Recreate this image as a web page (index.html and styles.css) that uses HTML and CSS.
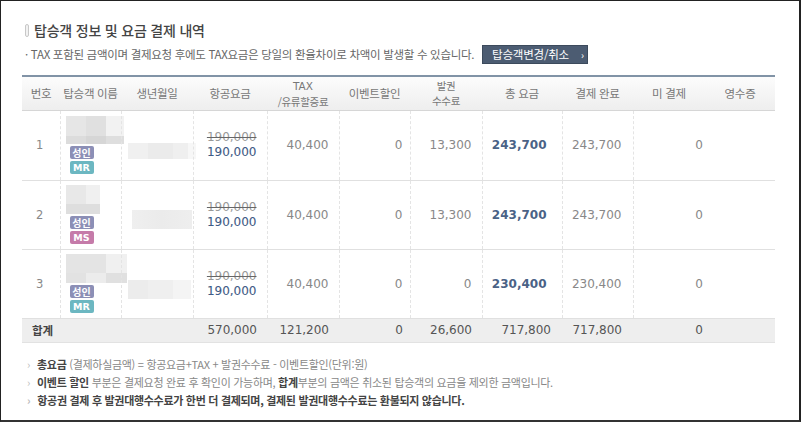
FILE: index.html
```html
<!DOCTYPE html>
<html lang="ko">
<head>
<meta charset="utf-8">
<link rel="stylesheet" href="styles.css">
</head>
<body>
<div class="frame">
  <h2 class="title"><span class="title-bar"></span>탑승객 정보 및 요금 결제 내역</h2>
  <div class="notice">
    <p class="notice-text">· TAX 포함된 금액이며 결제요청 후에도 TAX요금은 당일의 환율차이로 차액이 발생할 수 있습니다.</p>
    <button class="btn">탑승객변경/취소 <span class="btn-arrow">›</span></button>
  </div>
  <table class="fare">
    <colgroup>
      <col class="c-no"><col class="c-name"><col class="c-birth"><col class="c-fare"><col class="c-tax"><col class="c-evt"><col class="c-fee"><col class="c-total"><col class="c-paid"><col class="c-unpaid"><col class="c-rcpt">
    </colgroup>
    <thead>
      <tr>
        <th>번호</th><th>탑승객 이름</th><th>생년월일</th><th>항공요금</th><th class="two"><span class="latin">TAX</span><br>/유류할증료</th><th>이벤트할인</th><th class="two">발권<br>수수료</th><th>총 요금</th><th>결제 완료</th><th>미 결제</th><th>영수증</th>
      </tr>
    </thead>
    <tbody>
      <tr class="r1">
        <td class="no">1</td>
        <td class="name"><div class="blur b-n1"></div><span class="badge adult">성인</span><span class="badge mr">MR</span></td>
        <td class="birth"><div class="blur b-b1"></div></td>
        <td class="num fare-cell"><del>190,000</del><strong>190,000</strong></td>
        <td class="num">40,400</td>
        <td class="num evt">0</td>
        <td class="num">13,300</td>
        <td class="num total">243,700</td>
        <td class="num paid">243,700</td>
        <td class="num unpaid">0</td>
        <td class="rcpt"></td>
      </tr>
      <tr class="r2">
        <td class="no">2</td>
        <td class="name"><div class="blur b-n2"></div><span class="badge adult">성인</span><span class="badge ms">MS</span></td>
        <td class="birth"><div class="blur b-b2"></div></td>
        <td class="num fare-cell"><del>190,000</del><strong>190,000</strong></td>
        <td class="num">40,400</td>
        <td class="num evt">0</td>
        <td class="num">13,300</td>
        <td class="num total">243,700</td>
        <td class="num paid">243,700</td>
        <td class="num unpaid">0</td>
        <td class="rcpt"></td>
      </tr>
      <tr class="r3">
        <td class="no">3</td>
        <td class="name"><div class="blur b-n3"></div><span class="badge adult">성인</span><span class="badge mr">MR</span></td>
        <td class="birth"><div class="blur b-b3"></div></td>
        <td class="num fare-cell"><del>190,000</del><strong>190,000</strong></td>
        <td class="num">40,400</td>
        <td class="num evt">0</td>
        <td class="num">0</td>
        <td class="num total">230,400</td>
        <td class="num paid">230,400</td>
        <td class="num unpaid">0</td>
        <td class="rcpt"></td>
      </tr>
    </tbody>
    <tfoot>
      <tr>
        <td colspan="3" class="sum-label">합계</td>
        <td class="num">570,000</td>
        <td class="num">121,200</td>
        <td class="num evt">0</td>
        <td class="num">26,600</td>
        <td class="num total-sum">717,800</td>
        <td class="num paid">717,800</td>
        <td class="num unpaid">0</td>
        <td></td>
      </tr>
    </tfoot>
  </table>
  <ul class="notes">
    <li><b>총요금</b> (결제하실금액) = 항공요금+TAX + 발권수수료 - 이벤트할인(단위:원)</li>
    <li><b>이벤트 할인</b> 부분은 결제요청 완료 후 확인이 가능하며, <b>합계</b>부분의 금액은 취소된 탑승객의 요금을 제외한 금액입니다.</li>
    <li class="strong">항공권 결제 후 발권대행수수료가 한번 더 결제되며, 결제된 발권대행수수료는 환불되지 않습니다.</li>
  </ul>
</div>
</body>
</html>
```

FILE: styles.css
```css
* { box-sizing: border-box; }
html, body { margin: 0; padding: 0; background: #fff; }
body {
  font-family: "Noto Sans CJK KR", "Noto Sans", sans-serif;
  color: #666;
}
.frame {
  width: 801px;
  height: 422px;
  border: 1px solid #222;
  border-right-width: 2px;
  border-bottom: 2px solid #333;
  padding: 0 0 0 21px;
  position: relative;
  overflow: hidden;
}
.title {
  margin: 18px 0 0 3px;
  height: 22px;
  display: flex;
  align-items: center;
  font-size: 14px;
  font-weight: 500;
  color: #444;
  letter-spacing: -0.2px;
}
.title-bar {
  display: inline-block;
  width: 4px;
  height: 13px;
  border: 1px solid #c8c8c8;
  border-radius: 2px;
  background: #f2f2f2;
  margin-right: 5px;
}
.notice {
  display: flex;
  align-items: center;
  margin-top: 3px;
  height: 20px;
  padding-left: 3px;
}
.notice-text {
  margin: 0;
  font-size: 11.5px;
  color: #666;
  letter-spacing: -0.3px;
  width: 457px;
  white-space: nowrap;
}
.btn {
  width: 106px;
  height: 19px;
  border: 1px solid #3c4a5c;
  background: #4c5c72;
  color: #fff;
  font-family: "Noto Sans CJK KR", sans-serif;
  font-size: 11.5px;
  padding: 0 0 0 9px;
  text-align: left;
  line-height: 16px;
  letter-spacing: -0.2px;
}
.btn-arrow { margin-left: 9px; font-size: 10px; }

.fare {
  width: 753px;
  margin-top: 11px;
  border-collapse: collapse;
  table-layout: fixed;
  border-top: 2px solid #8193a6;
}
.c-no { width: 38px; }
.c-name { width: 61px; }
.c-birth { width: 72px; }
.c-fare { width: 74px; }
.c-tax { width: 72px; }
.c-evt { width: 71px; }
.c-fee { width: 72px; }
.c-total { width: 80px; }
.c-paid { width: 71px; }
.c-unpaid { width: 72px; }
.c-rcpt { width: 70px; }

.fare th {
  height: 34px;
  font-size: 11.5px;
  font-weight: 400;
  color: #777;
  background: linear-gradient(#fcfcfc, #eeeeee);
  border-bottom: 1px solid #d6d6d6;
  padding: 0;
  letter-spacing: -0.3px;
  white-space: nowrap;
}
.fare th.two { line-height: 15px; font-size: 10.5px; }
.fare th .latin { font-family: "DejaVu Sans", sans-serif; font-size: 10.5px; letter-spacing: 0; }
.fare tbody td {
  border-bottom: 1px solid #e0e0e0;
  border-right: 1px dashed #e4e4e4;
  padding: 0;
  vertical-align: middle;
  font-size: 12px;
  color: #888;
}
.fare tbody tr.r1 td { height: 70px; }
.fare tbody tr.r2 td { height: 69px; }
.fare tbody tr.r3 td { height: 69px; }
.fare tbody td.unpaid, .fare tbody td.rcpt { border-right: none; }
.fare td.no { text-align: center; font-family: "DejaVu Sans", sans-serif; font-size: 11.5px; color: #888; padding-right: 2px; }
.fare td.name { padding-left: 5px; }
.fare td.birth { padding-left: 6px; }
.num {
  text-align: right;
  font-family: "DejaVu Sans", sans-serif;
  font-size: 12px;
  color: #888;
  padding-right: 10px !important;
  white-space: nowrap;
}
.fare td.evt { padding-right: 7px !important; }
.fare td.total { color: #4a6286; font-weight: bold; padding-right: 15px !important; }
.fare td.paid { padding-right: 11px !important; }
.fare td.unpaid { padding-right: 2px !important; }
.fare-cell { line-height: 15px; }
.fare-cell del { display: block; color: #999; text-decoration-color: #666; }
.fare-cell strong { display: block; color: #3f5b86; font-weight: 400; -webkit-text-stroke: 0.1px #3f5b86; }

.blur { background: #e9e9e9; }
.b-n1 {
  width: 58px; height: 28px; margin-bottom: 2px;
  background:
    linear-gradient(90deg, #e6e6e6 0 20px, #e0e0e0 20px 40px, #f2f2f2 40px) top/100% 20px no-repeat,
    linear-gradient(90deg, #dcdcdc 0 20px, #d6d6d6 20px 40px, #dedede 40px) bottom/100% 8px no-repeat;
}
.b-n2 {
  width: 34px; height: 29px; margin-bottom: 2px;
  background:
    linear-gradient(90deg, #e8e8e8 0 20px, #f0f0f0 20px) top/100% 19px no-repeat,
    #dedede;
}
.b-n3 {
  width: 61px; height: 29px; margin-bottom: 2px;
  background:
    linear-gradient(90deg, #e4e4e4 0 40px, #f0f0f0 40px) top/100% 19px no-repeat,
    linear-gradient(90deg, #e2e2e2 0 20px, #ececec 20px 40px, #e0e0e0 40px) bottom/100% 10px no-repeat;
}
.b-b1 { width: 68px; height: 16px; margin-top: 12px; background: linear-gradient(90deg, #f0f0f0 0 20px, #ebebeb 20px 45px, #efefef 45px 60px, #f7f7f7 60px); }
.b-b2 { width: 60px; height: 19px; margin-left: 4px; margin-top: 10px; background: linear-gradient(90deg, #efefef, #ebebeb 50%, #eeeeee); }
.b-b3 { width: 63px; height: 19px; margin-top: 12px; background: linear-gradient(90deg, #ececec 0 20px, #efefef 20px 45px, #f4f4f4 45px); }

.badge {
  display: block;
  width: 24px;
  height: 13px;
  margin-left: 4px;
  margin-top: 1px;
  border-radius: 2px;
  color: #fff;
  font-size: 10px;
  font-weight: 700;
  line-height: 13px;
  text-align: center;
  font-family: "Noto Sans CJK KR", sans-serif;
}
.badge + .badge { margin-top: 2px; }
.badge.adult { background: #8c8fb6; }
.badge.mr { background: #6cb7c1; font-family: "DejaVu Sans", sans-serif; font-size: 9.5px; }
.badge.ms { background: #c57ba9; font-family: "DejaVu Sans", sans-serif; font-size: 9.5px; }

.fare tfoot td {
  background: #eeeeee;
  height: 24px;
  font-size: 12px;
  color: #555;
  border-bottom: 1px solid #e2e2e2;
}
.fare tfoot td.num { color: #555; }
.fare tfoot td.total-sum { padding-right: 11px !important; }
.sum-label {
  font-weight: 700;
  color: #444 !important;
  padding-left: 10px;
  font-size: 11.5px !important;
}

.notes {
  list-style: none;
  margin: 12px 0 0 5px;
  padding: 0;
  font-size: 11px;
  color: #888;
  letter-spacing: -0.3px;
}
.notes li {
  height: 18px;
  line-height: 18px;
  white-space: nowrap;
}
.notes li::before {
  content: "›";
  color: #bbb;
  margin-right: 7px;
}
.notes b { color: #444; font-weight: 700; }
.notes li.strong { color: #444; font-weight: 700; }
```
